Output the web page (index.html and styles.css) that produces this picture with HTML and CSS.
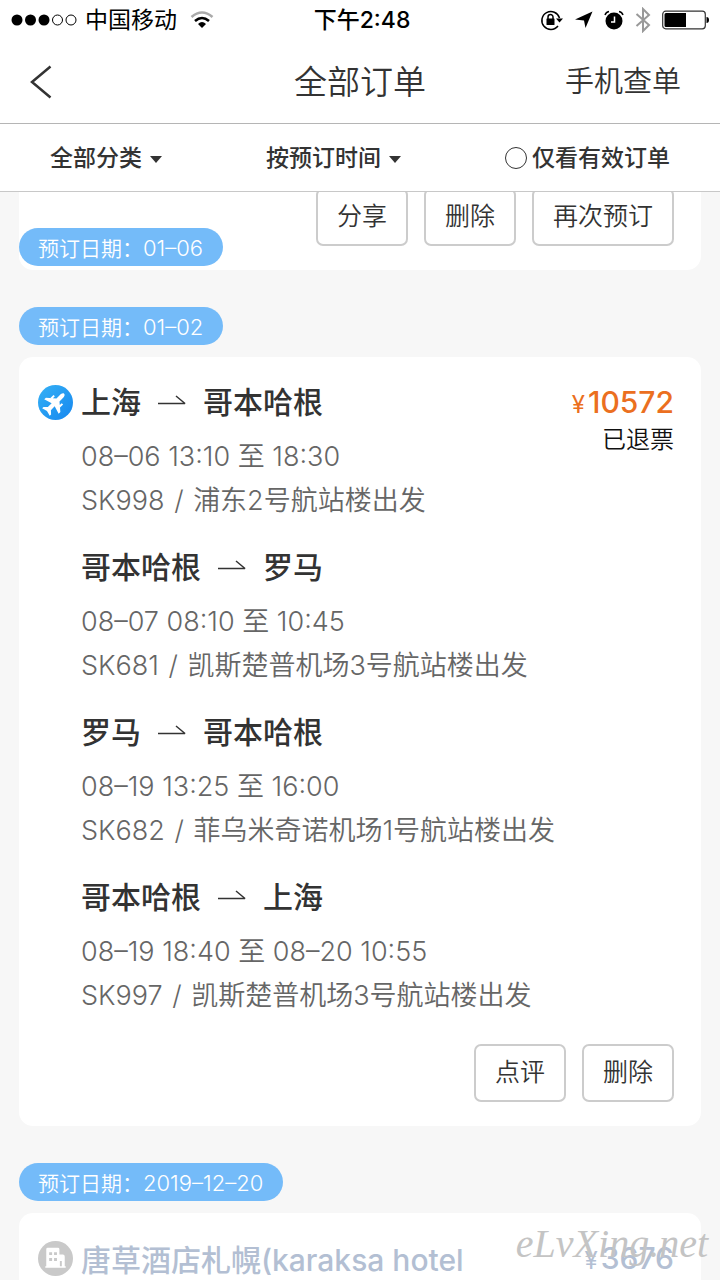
FILE: index.html
```html
<!DOCTYPE html>
<html lang="zh-CN">
<head>
<meta charset="utf-8">
<meta name="viewport" content="width=device-width, initial-scale=1">
<title>全部订单</title>
<link rel="stylesheet" href="styles.css">
</head>
<body>
<svg class="defs" width="0" height="0" aria-hidden="true">
  <symbol id="arrow" viewBox="0 0 30 12"><path d="M1 9.500H28L19 2" fill="none" stroke="currentColor" stroke-width="1.500" stroke-linejoin="bevel"/></symbol>
</svg>
<div class="app">
  <div class="status-bar">
    <div class="carrier">
      <svg width="66" height="14" viewBox="0 0 66 14" aria-hidden="true">
        <circle cx="6" cy="7" r="5.500"/><circle cx="19.500" cy="7" r="5.500"/><circle cx="33" cy="7" r="5.500"/>
        <circle cx="46.500" cy="7" r="5" fill="none" stroke="#000"/><circle cx="60" cy="7" r="5" fill="none" stroke="#000"/>
      </svg>
      <span>中国移动</span>
      <svg class="wifi" width="24" height="18" viewBox="0 0 24 18" fill="none" stroke-width="2.600" aria-hidden="true">
        <path d="M1.500 6Q12-3 22.500 6" stroke="#aaa"/>
        <path d="M5 10Q12 4 19 10" stroke="#000"/>
        <path d="M8 13Q12 9 16 13L12 17Z" fill="#000" stroke="none"/>
      </svg>
    </div>
    <time class="clock">下午2:48</time>
    <div class="indicators">
      <svg width="24" height="22" viewBox="0 0 24 22" aria-hidden="true">
        <path d="M18 17A9 9 0 1 1 19.500 9" fill="none" stroke="#000" stroke-width="1.500"/>
        <path d="M16 9.500H23L19.500 13.500Z"/>
        <rect x="6.500" y="9.500" width="8" height="6.500" rx=".5"/>
        <path d="M8 10V8a2.500 2.500 0 0 1 5 0v2" fill="none" stroke="#000" stroke-width="1.500"/>
      </svg>
      <svg width="18" height="18" viewBox="0 0 18 18" aria-hidden="true"><path d="M17.500.5L10.500 17L9 9.500L0 8.500Z"/></svg>
      <svg width="20" height="20" viewBox="0 0 20 20" aria-hidden="true">
        <circle cx="10" cy="11" r="8.500"/><path d="M10.500 6.500V12H7" fill="none" stroke="#fff" stroke-width="1.500"/>
        <path d="M1 5Q2 2 5 1.500M19 5Q18 2 15 1.500" fill="none" stroke="#000" stroke-width="1.500"/>
      </svg>
      <svg width="16" height="26" viewBox="0 0 16 26" aria-hidden="true"><path d="M1.500 7L14 18 8 24V2L14 8 1.500 19" fill="none" stroke="#999" stroke-width="2"/></svg>
      <svg width="47" height="20" viewBox="0 0 47 20" aria-hidden="true">
        <rect x=".7" y="1.200" width="42.600" height="17.600" rx="3" fill="none" stroke="#333" stroke-width="1.200"/>
        <path d="M4 3H24V17H4Q2.500 17 2.500 15.500V4.500Q2.500 3 4 3ZM44.500 7Q47 7 47 10T44.500 13Z"/>
      </svg>
    </div>
  </div>

  <header class="nav">
    <button class="back" aria-label="返回"><svg width="22" height="34" viewBox="0 0 22 34"><path d="M20.500 1.500L2 17L20.500 32.500" fill="none" stroke="#333" stroke-width="2.500"/></svg></button>
    <h1>全部订单</h1>
    <a class="lookup" href="#">手机查单</a>
  </header>

  <div class="filters">
    <button class="filter">全部分类<i class="caret"></i></button>
    <button class="filter">按预订时间<i class="caret"></i></button>
    <label class="filter"><input type="checkbox" class="round-check">仅看有效订单</label>
  </div>

  <main class="orders">
    <section class="group group-scrolled">
      <article class="card">
        <div class="actions"><button>分享</button><button>删除</button><button>再次预订</button></div>
      </article>
      <h2 class="date pinned">预订日期：<span class="day">01–06</span></h2>
    </section>

    <section class="group">
      <h2 class="date">预订日期：<span class="day">01–02</span></h2>
      <article class="card">
        <div class="order">
          <svg class="kind" viewBox="0 0 36 36" aria-hidden="true">
            <defs><linearGradient id="sky" x1="0" y1="0" x2="1" y2="1"><stop offset="0" stop-color="#35b1f5"/><stop offset="1" stop-color="#1687ef"/></linearGradient></defs>
            <circle cx="18" cy="18" r="18" fill="url(#sky)"/>
            <path transform="translate(17 19) rotate(45)" fill="#fff" d="M0-14C1.700-14 2.200-12 2.200-10V-5L10.500 2V4.500L2.200 2V7.500L5.500 10.500V12.500L0 11L-5.500 12.500V10.500L-2.200 7.500V2L-10.500 4.500V2L-2.200-5V-10C-2.200-12-1.700-14 0-14ZM5-5.500H7V-1L5-2.600ZM-5-5.500H-7V-1L-5-2.600Z"/>
          </svg>
          <div class="flights">
            <div class="flight">
              <h3>上海<svg class="arrow" role="img" aria-label="至"><use href="#arrow"/></svg>哥本哈根</h3>
              <p>08–06 13:10 至 18:30</p><p>SK998 <span class="slash">/</span> 浦东2号航站楼出发</p>
            </div>
            <div class="flight">
              <h3>哥本哈根<svg class="arrow" role="img" aria-label="至"><use href="#arrow"/></svg>罗马</h3>
              <p>08–07 08:10 至 10:45</p><p>SK681 <span class="slash">/</span> 凯斯楚普机场3号航站楼出发</p>
            </div>
            <div class="flight">
              <h3>罗马<svg class="arrow" role="img" aria-label="至"><use href="#arrow"/></svg>哥本哈根</h3>
              <p>08–19 13:25 至 16:00</p><p>SK682 <span class="slash">/</span> 菲乌米奇诺机场1号航站楼出发</p>
            </div>
            <div class="flight">
              <h3>哥本哈根<svg class="arrow" role="img" aria-label="至"><use href="#arrow"/></svg>上海</h3>
              <p>08–19 18:40 至 08–20 10:55</p><p>SK997 <span class="slash">/</span> 凯斯楚普机场3号航站楼出发</p>
            </div>
          </div>
          <div class="summary">
            <div class="price"><span class="yen">¥</span>10572</div>
            <div class="state">已退票</div>
          </div>
        </div>
        <div class="actions"><button>点评</button><button>删除</button></div>
      </article>
    </section>

    <section class="group">
      <h2 class="date">预订日期：<span class="day">2019–12–20</span></h2>
      <article class="card faded">
        <div class="order">
          <svg class="kind" viewBox="0 0 36 36" aria-hidden="true">
            <circle cx="18" cy="18" r="18" fill="#c9c9c9"/>
            <path fill="#fff" fill-rule="evenodd" d="M8.500 8.500Q8.500 7 10 7H20.500Q22 7 22 8.500V14H25.500Q27.500 14 27.500 16V26H28.500V27.500H7.500V26H8.500ZM11.500 11.500v3h3v-3zm5 0v3h3v-3zM11.500 17.500v3h3v-3zm5 0v3h3v-3zM22.500 20.500v5.500h2v-5.500z"/>
          </svg>
          <div class="flights"><h3>唐草酒店札幌(karaksa hotel</h3></div>
          <div class="summary"><div class="price"><span class="yen">¥</span>3676</div></div>
        </div>
      </article>
    </section>
  </main>
  <div class="watermark">eLvXing.net</div>
</div>
</body>
</html>
```
FILE: styles.css
```css
* { box-sizing: border-box; }

body {
  margin: 0;
  background: #f7f7f7;
  color: #333;
  font-family: Inter, "Noto Sans CJK SC", sans-serif;
}

h1, h2, h3, p { margin: 0; font-weight: 400; }

button {
  padding: 0;
  border: 0;
  background: none;
  color: inherit;
  font: inherit;
}

svg { flex: none; }
.defs { position: absolute; }

.app {
  position: relative;
  display: flex;
  flex-direction: column;
  height: 100vh;
  overflow: hidden;
}

.status-bar, .nav {
  display: grid;
  grid-template-columns: 1fr auto 1fr;
  align-items: center;
  background: #fff;
}

.status-bar {
  height: 40px;
  padding: 0 11px;
  color: #000;
  font-size: 23px;
  line-height: 40px;
}

.carrier, .indicators { display: flex; align-items: center; }
.carrier { gap: 8px; }
.wifi { margin-left: 5px; }
.clock { padding-left: 4px; font-weight: 500; }
.indicators { justify-content: flex-end; gap: 11px; }

.nav {
  height: 84px;
  padding: 0 39px;
  border-bottom: 1px solid #b5b5b5;
}

.back { display: flex; justify-self: start; margin-left: -9px; }
.nav h1 { font-size: 33px; font-weight: 350; line-height: 48px; }
.lookup {
  justify-self: end;
  color: inherit;
  font-size: 29px;
  font-weight: 350;
  line-height: 48px;
  text-decoration: none;
}

.filters {
  display: flex;
  justify-content: space-between;
  height: 68px;
  padding: 0 50px;
  border-bottom: 1px solid #c8c8c8;
  background: #fff;
}

.filter {
  display: flex;
  align-items: center;
  font-size: 23px;
  font-weight: 500;
  line-height: 64px;
}

.caret {
  margin: 4px 0 0 8px;
  border: 6px solid transparent;
  border-top: 7px solid #333;
  border-bottom: 0;
}

.round-check {
  appearance: none;
  width: 22px;
  height: 22px;
  margin: 0 5px 0 0;
  border: 1px solid #333;
  border-radius: 50%;
}

.round-check:checked { background: #333; }

.orders {
  flex: 1;
  min-height: 0;
  overflow: hidden;
  padding: 0 19px;
}

.group { position: relative; margin-bottom: 37px; }
.group-scrolled { margin-top: -30px; }

.date {
  width: fit-content;
  height: 38px;
  margin-bottom: 12px;
  padding: 0 20px 0 19px;
  border-radius: 19px;
  background: #74bbf9;
  color: #fff;
  font-size: 21px;
  font-weight: 350;
  line-height: 40px;
}

.day { font-size: 22px; }

.pinned {
  position: absolute;
  bottom: 4px;
  left: 0;
  margin: 0;
}

.card {
  padding: 12px 27px 24px 19px;
  border-radius: 14px;
  background: #fff;
}

.order { display: flex; }
.kind { width: 35px; height: 35px; margin: 16px 8px 0 0; }
.flights { display: grid; flex: 1; gap: 11px; }

.flights h3 {
  display: flex;
  align-items: center;
  font-size: 30px;
  font-weight: 500;
  line-height: 66px;
}

.arrow { width: 30px; height: 12px; margin: 0 16px 5px; }

.flight p {
  color: #666;
  font-size: 27px;
  font-weight: 350;
  line-height: 44px;
}

.slash { margin: 0 2px; }

.summary { text-align: right; }

.price {
  color: #eb6f20;
  font-size: 30px;
  font-weight: 500;
  line-height: 66px;
}

.yen { margin-right: 3px; font-size: 24px; font-weight: 400; }

.state {
  margin-top: -18px;
  color: #111;
  font-size: 24px;
  font-weight: 350;
  line-height: 40px;
}

.actions {
  display: flex;
  justify-content: flex-end;
  gap: 16px;
  margin-top: 26px;
}

.group-scrolled .actions { margin-top: 14px; }

.actions button {
  height: 58px;
  padding: 0 19px 2px;
  border: 2px solid #ccc;
  border-radius: 7px;
  font-size: 25px;
  font-weight: 350;
  line-height: 52px;
}

.faded h3, .faded .price { color: #b3bfd3; }

.watermark {
  position: absolute;
  right: 12px;
  bottom: 14px;
  color: #c4c4c4;
  font-family: "Liberation Serif", serif;
  font-size: 40px;
  font-style: italic;
  line-height: 44px;
}
```
